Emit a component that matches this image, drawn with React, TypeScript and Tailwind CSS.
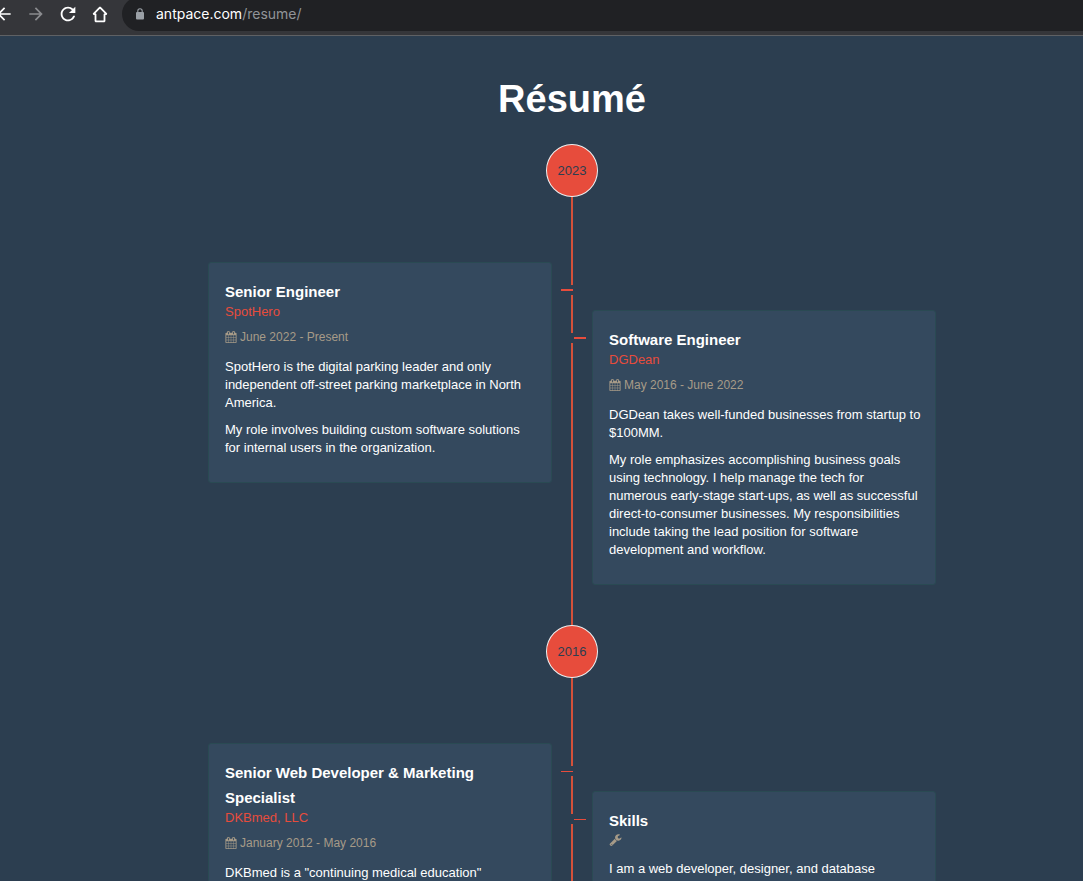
import React from 'react';
import { MdArrowBack, MdArrowForward, MdRefresh } from 'react-icons/md';

interface Entry {
  title: string;
  company?: string;
  date?: string;
  paragraphs: string[];
}

interface Period {
  year: string;
  left: Entry;
  right: Entry;
  tick: string;
}

const periods: Period[] = [
  {
    year: '2023',
    tick: 'h-[2px]',
    left: {
      title: 'Senior Engineer',
      company: 'SpotHero',
      date: 'June 2022 - Present',
      paragraphs: [
        'SpotHero is the digital parking leader and only independent off-street parking marketplace in North America.',
        'My role involves building custom software solutions for internal users in the organization.',
      ],
    },
    right: {
      title: 'Software Engineer',
      company: 'DGDean',
      date: 'May 2016 - June 2022',
      paragraphs: [
        'DGDean takes well-funded businesses from startup to $100MM.',
        'My role emphasizes accomplishing business goals using technology. I help manage the tech for numerous early-stage start-ups, as well as successful direct-to-consumer businesses. My responsibilities include taking the lead position for software development and workflow.',
      ],
    },
  },
  {
    year: '2016',
    tick: 'h-px',
    left: {
      title: 'Senior Web Developer & Marketing Specialist',
      company: 'DKBmed, LLC',
      date: 'January 2012 - May 2016',
      paragraphs: ['DKBmed is a "continuing medical education"'],
    },
    right: {
      title: 'Skills',
      paragraphs: ['I am a web developer, designer, and database'],
    },
  },
];

const CalendarIcon = () => (
  <svg viewBox="0 0 1792 1792" className="h-3 w-3 shrink-0" fill="currentColor" aria-hidden="true">
    <path d="M192 1664h288v-288h-288v288zM544 1664h320v-288h-320v288zM192 1312h288v-320h-288v320zM544 1312h320v-320h-320v320zM192 928h288v-288h-288v288zM928 1664h320v-288h-320v288zM544 928h320v-288h-320v288zM1312 1664h288v-288h-288v288zM928 1312h320v-320h-320v320zM576 448v-288q0-13-9.5-22.5t-22.5-9.5h-64q-13 0-22.5 9.5t-9.5 22.5v288q0 13 9.5 22.5t22.5 9.5h64q13 0 22.5-9.5t9.5-22.5zM1312 1312h288v-320h-288v320zM928 928h320v-288h-320v288zM1312 928h288v-288h-288v288zM1344 448v-288q0-13-9.5-22.5t-22.5-9.5h-64q-13 0-22.5 9.5t-9.5 22.5v288q0 13 9.5 22.5t22.5 9.5h64q13 0 22.5-9.5t9.5-22.5zM1728 384v1280q0 52-38 90t-90 38h-1408q-52 0-90-38t-38-90v-1280q0-52 38-90t90-38h128v-96q0-66 47-113t113-47h64q66 0 113 47t47 113v96h384v-96q0-66 47-113t113-47h64q66 0 113 47t47 113v96h128q52 0 90 38t38 90z" />
  </svg>
);

const WrenchIcon = () => (
  <svg viewBox="0 0 1792 1792" className="h-[13px] w-[13px] shrink-0" fill="currentColor" aria-hidden="true">
    <path d="M448 1472q0-26-19-45t-45-19-45 19-19 45 19 45 45 19 45-19 19-45zM1092 948l-682 682q-37 37-90 37-52 0-91-37l-106-108q-38-36-38-90 0-53 38-91l681-681q39 98 114.5 173.5t173.5 114.5zM1726 513q0 39-23 106-47 134-164.5 217.5t-258.5 83.5q-185 0-316.5-131.5t-131.5-316.5 131.5-316.5 316.5-131.5q58 0 121.5 16.5t107.5 46.5q16 11 16 28t-16 28l-293 169v224l193 107q5-3 79-48.5t135.5-81 70.5-35.5q15 0 23.5 10t8.5 25z" />
  </svg>
);

const HomeIcon = () => (
  <svg viewBox="0 0 20 20" className="h-5 w-5" fill="none" stroke="currentColor" strokeWidth="1.8" aria-hidden="true">
    <path d="M10 3.4 3.4 10.1H5.5v7.2h9v-7.2h2.1L10 3.4Z" strokeLinejoin="bevel" />
  </svg>
);

const LockIcon = () => (
  <svg viewBox="0 0 12 14" className="h-[14px] w-3 shrink-0 text-[#9aa0a6]" aria-hidden="true">
    <rect x="2" y="5" width="8" height="7.5" rx="1" fill="currentColor" />
    <path d="M3.8 5.5V4a2.2 2.2 0 0 1 4.4 0v1.5" fill="none" stroke="currentColor" strokeWidth="1.1" />
  </svg>
);

const BrowserBar = () => (
  <header className="flex h-9 shrink-0 items-center overflow-hidden border-b border-[#5f6164] bg-[#35363a] pb-[7px]">
    <nav className="-ml-[6px] flex items-center gap-3 text-white">
      <button aria-label="Back" className="grid h-5 w-5 place-items-center"><MdArrowBack size={20} /></button>
      <button aria-label="Forward" className="grid h-5 w-5 place-items-center text-[#8b8c8f]"><MdArrowForward size={20} /></button>
      <button aria-label="Reload" className="flex h-5 w-5 items-center justify-center"><MdRefresh size={22} className="shrink-0" /></button>
      <button aria-label="Home" className="grid h-5 w-5 place-items-center"><HomeIcon /></button>
    </nav>
    <button className="ml-3 flex h-[34px] flex-1 items-center gap-[10px] rounded-l-full bg-[#202124] pl-3 text-left font-['Inter',sans-serif] text-[14px] leading-5 text-[#919498]">
      <LockIcon />
      <span><span className="text-white">antpace.com</span>/resume/</span>
    </button>
  </header>
);

const Card: React.FC<{ entry: Entry }> = ({ entry }) => (
  <article className="rounded-[3px] border border-[#2a4a53] bg-[#34495e] pt-4 pr-[13px] pb-[25px] pl-4">
    <h2 className="text-[15px] font-bold leading-[25px]">{entry.title}</h2>
    {entry.company && <p className="leading-4 text-[#e74c3c]">{entry.company}</p>}
    {entry.date ? (
      <p className="mt-[9px] flex items-center gap-[3px] text-[12px] leading-4 text-[#a79b88]">
        <CalendarIcon />
        {entry.date}
      </p>
    ) : (
      <p className="flex h-[14px] items-center text-[#a79b88]"><WrenchIcon /></p>
    )}
    <div className="mt-[13px] flex flex-col gap-[9px]">
      {entry.paragraphs.map(text => <p key={text}>{text}</p>)}
    </div>
  </article>
);

const TimelinePeriod: React.FC<{ period: Period }> = ({ period }) => (
  <section>
    <h2 className="mx-auto grid h-[53px] w-[52px] place-items-center rounded-[50%] border border-[#ecf0f1] bg-[#e74c3c] text-[13px] text-[#2c3e50]">
      {period.year}
    </h2>
    <div className="grid grid-cols-[1fr_40px_1fr]">
      <div className="pt-[65px]"><Card entry={period.left} /></div>
      {/* centre line, broken where each card's tick branches off */}
      <div className="flex flex-col items-center">
        <div className="h-[88px] w-[2px] bg-[#d4513a]" />
        <div className="flex h-[10px] w-full items-center pl-[9px]"><div className={`w-3 bg-[#e74c3c] ${period.tick}`} /></div>
        <div className="h-[38px] w-[2px] bg-[#d4513a]" />
        <div className="flex h-[10px] w-full items-center pl-[22px]"><div className={`w-3 bg-[#e74c3c] ${period.tick}`} /></div>
        <div className="w-[2px] flex-1 bg-[#d4513a]" />
      </div>
      <div className="pt-[113px] pb-10"><Card entry={period.right} /></div>
    </div>
  </section>
);

const App = () => (
  <div className="flex h-screen flex-col overflow-hidden bg-[#2c3e50]">
    <BrowserBar />
    <main className="min-h-0 flex-1 overflow-hidden pl-[61px] font-['Liberation_Sans',Arial,sans-serif] text-[13px] leading-[18px] text-white">
      <h1 className="pt-[39px] pb-[21px] text-center text-[38px] font-bold leading-[48px]">Résumé</h1>
      <div className="mx-auto max-w-[728px]">
        {periods.map(period => <TimelinePeriod key={period.year} period={period} />)}
      </div>
    </main>
  </div>
);

export default App;
